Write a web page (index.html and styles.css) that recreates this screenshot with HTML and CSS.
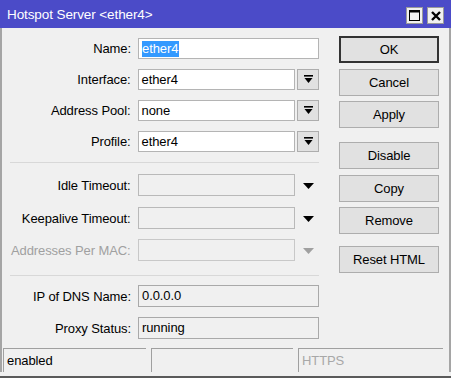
FILE: index.html
```html
<!DOCTYPE html>
<html lang="en">
  <head>
    <meta charset="UTF-8" />
    <title>Hotspot Server &lt;ether4&gt;</title>
    <link rel="stylesheet" href="styles.css">
  </head>
  <body>
    <div class="window">
      <div class="titlebar">
        <span class="title">Hotspot Server &lt;ether4&gt;</span>
        <span class="tbtn">
          <svg width="11" height="11" viewBox="0 0 11 11"><rect x="0.5" y="0.5" width="10" height="10" fill="none" stroke="#000" /><rect x="0" y="0" width="11" height="2.5" fill="#000" /></svg>
        </span>
        <span class="tbtn">
          <svg width="10" height="10" viewBox="0 0 10 10"><path d="M1 1 L9 9 M9 1 L1 9" stroke="#000" stroke-width="2.4" /></svg>
        </span>
      </div>

      <div class="content">
        <div class="form">
          <div class="row">
            <label class="label">Name:</label>
            <div class="field wide"><span class="sel">ether4</span></div>
          </div>
          <div class="row">
            <label class="label">Interface:</label>
            <div class="field">ether4</div>
            <span class="drop"><svg width="9" height="9" viewBox="0 0 9 9"><rect x="0" y="0" width="9" height="1.6" fill="#000" /><path d="M0.5 3 H8.5 L4.5 8 Z" fill="#000" /></svg></span>
          </div>
          <div class="row">
            <label class="label">Address Pool:</label>
            <div class="field">none</div>
            <span class="drop"><svg width="9" height="9" viewBox="0 0 9 9"><rect x="0" y="0" width="9" height="1.6" fill="#000" /><path d="M0.5 3 H8.5 L4.5 8 Z" fill="#000" /></svg></span>
          </div>
          <div class="row">
            <label class="label">Profile:</label>
            <div class="field">ether4</div>
            <span class="drop"><svg width="9" height="9" viewBox="0 0 9 9"><rect x="0" y="0" width="9" height="1.6" fill="#000" /><path d="M0.5 3 H8.5 L4.5 8 Z" fill="#000" /></svg></span>
          </div>

          <div class="sep first"></div>

          <div class="row tall idle">
            <label class="label">Idle Timeout:</label>
            <div class="field empty"></div>
            <span class="arrow"><svg width="11" height="6" viewBox="0 0 11 6"><path d="M0 0 H11 L5.5 6 Z" fill="#000" /></svg></span>
          </div>
          <div class="row tall keep">
            <label class="label">Keepalive Timeout:</label>
            <div class="field empty"></div>
            <span class="arrow"><svg width="11" height="6" viewBox="0 0 11 6"><path d="M0 0 H11 L5.5 6 Z" fill="#000" /></svg></span>
          </div>
          <div class="row tall">
            <label class="label off">Addresses Per MAC:</label>
            <div class="field empty faint"></div>
            <span class="arrow"><svg width="11" height="6" viewBox="0 0 11 6"><path d="M0 0 H11 L5.5 6 Z" fill="#a0a0a0" /></svg></span>
          </div>

          <div class="sep second"></div>

          <div class="row tall">
            <label class="label">IP of DNS Name:</label>
            <div class="field wide ro">0.0.0.0</div>
          </div>
          <div class="row tall">
            <label class="label">Proxy Status:</label>
            <div class="field wide ro">running</div>
          </div>
        </div>

        <div class="buttons">
          <button class="btn default">OK</button>
          <button class="btn">Cancel</button>
          <button class="btn">Apply</button>
          <button class="btn gap">Disable</button>
          <button class="btn">Copy</button>
          <button class="btn">Remove</button>
          <button class="btn gap2">Reset HTML</button>
        </div>
      </div>

      <div class="status">
        <div class="cell c1">enabled</div>
        <div class="cell c2"></div>
        <div class="cell c3 dim">HTTPS</div>
      </div>
    </div>
  </body>
</html>
```

FILE: styles.css
```css
* {
  box-sizing: border-box;
}
body {
  margin: 0;
  font-family: 'Liberation Sans', Arial, sans-serif;
  font-size: 13px;
  letter-spacing: -0.1px;
  color: #000;
}
.window {
  width: 451px;
  height: 378px;
  background: #f0f0f0;
  display: flex;
  flex-direction: column;
  border-bottom: 2px solid #5a5a5a;
}
.titlebar {
  height: 28px;
  flex-shrink: 0;
  background: #4b4bc8;
  color: #fff;
  display: flex;
  align-items: center;
  padding: 0 7px 0 7px;
  gap: 4px;
}
.title {
  flex: 1;
  font-size: 13.5px;
  padding-top: 1px;
}
.tbtn {
  width: 17px;
  height: 17px;
  background: #f0f0f0;
  border: 1px solid #9a9a9a;
  display: flex;
  align-items: center;
  justify-content: center;
  margin-top: 3px;
}
.content {
  height: 320px;
  flex-shrink: 0;
  display: flex;
  border-left: 2px solid #a5a5a5;
  border-right: 2px solid #a5a5a5;
}
.form {
  width: 317px;
  padding-top: 10px;
}
.row {
  display: flex;
  align-items: center;
  height: 21px;
  margin-bottom: 10px;
  flex-shrink: 0;
}
.row.tall {
  height: 22px;
}
.row.tall .field,
.row.tall .arrow {
  height: 22px;
  line-height: 20px;
}
.row.idle {
  margin-bottom: 11px;
}
.row.keep {
  margin-bottom: 10px;
}
.label {
  width: 129px;
  margin-right: 7px;
  text-align: right;
}
.label.off {
  color: #a0a0a0;
}
.field {
  width: 158px;
  height: 21px;
  background: #fff;
  border: 1px solid #b4b4b4;
  padding: 0 3px;
  line-height: 19px;
}
.field.wide {
  width: 181px;
}
.field.empty {
  background: #f0f0f0;
  border-color: #b9b9b9;
}
.field.faint {
  border-color: #c8c8c8;
}
.field.ro {
  background: #f0f0f0;
  border-color: #a9a9a9;
}
.sel {
  background: #3399ff;
  color: #fff;
  display: inline-block;
  line-height: 16px;
  padding-right: 1px;
}
.drop {
  width: 22px;
  height: 21px;
  margin-left: 2px;
  background: #e1e1e1;
  border: 1px solid #adadad;
  display: flex;
  align-items: center;
  justify-content: center;
}
.arrow {
  width: 22px;
  height: 21px;
  margin-left: 2px;
  display: flex;
  align-items: center;
  justify-content: center;
  padding-top: 1px;
}
.sep {
  height: 1px;
  margin-left: 8px;
  background: #d8d8d8;
}
.sep.first {
  margin-top: 1px;
  margin-bottom: 11px;
}
.sep.second {
  margin-top: 14px;
  margin-bottom: 9px;
}
.buttons {
  margin-left: 20px;
  padding-top: 8px;
  display: flex;
  flex-direction: column;
  gap: 5.5px;
}
.btn {
  width: 100px;
  height: 27px;
  background: #e1e1e1;
  border: 1px solid #adadad;
  font-family: 'Liberation Sans', Arial, sans-serif;
  font-size: 13px;
  letter-spacing: -0.1px;
  color: #000;
  padding: 0;
}
.btn.default {
  border: 2px solid #333;
}
.btn.gap {
  margin-top: 8.5px;
}
.btn.gap2 {
  margin-top: 6.5px;
}
.status {
  display: flex;
  gap: 5px;
  padding: 0 6px 0 3px;
  height: 24px;
  flex-shrink: 0;
  margin-top: 0;
  border-left: 2px solid #a5a5a5;
  border-right: 2px solid #a5a5a5;
}
.cell {
  height: 24px;
  border-top: 1px solid #a0a0a0;
  border-left: 1px solid #a0a0a0;
  padding: 0 3px;
  line-height: 24px;
}
.c1 {
  width: 143px;
  margin-left: -2px;
}
.c2 {
  width: 142px;
}
.c3 {
  flex: 1;
}
.dim {
  color: #a8a8a8;
}
```
